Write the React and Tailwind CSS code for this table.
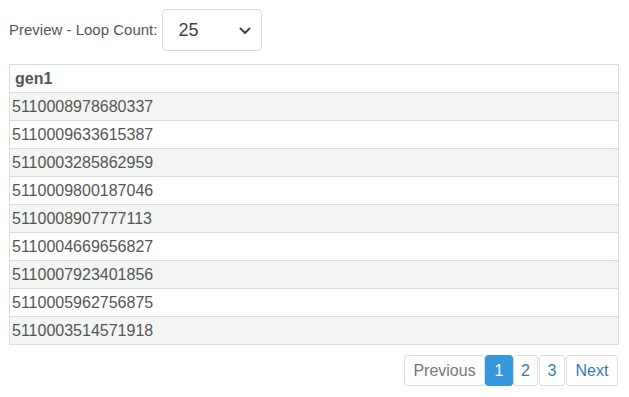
import React from "react";

const rows = [
  "5110008978680337",
  "5110009633615387",
  "5110003285862959",
  "5110009800187046",
  "5110008907777113",
  "5110004669656827",
  "5110007923401856",
  "5110005962756875",
  "5110003514571918",
];

export default function App() {
  return (
    <div className="w-[629px] h-[397px] bg-white text-[#555] pl-[9px] pr-[10px]" style={{ fontFamily: '"Liberation Sans", Arial, sans-serif' }}>
      <div className="flex items-center pt-[9px] h-[51px]">
        <span className="text-[15px] text-[#555] mr-[5px]">Preview - Loop Count:</span>
        <div className="w-[100px] h-[42px] border border-[#ddd] rounded-[4px] flex items-center justify-between pl-[15px] pr-[10px]">
          <span className="text-[18px] text-[#444]">25</span>
          <svg width="12" height="8" viewBox="0 0 12 8" className="mt-[1px]">
            <path d="M1.5 1.5 L6 6 L10.5 1.5" fill="none" stroke="#444" strokeWidth="2" strokeLinecap="round" strokeLinejoin="round" />
          </svg>
        </div>
      </div>
      <div className="mt-[13px] border border-[#ddd]">
        <div className="h-[27px] flex items-center pl-[5px] text-[16px] font-bold text-[#555]">gen1</div>
        {rows.map((r, i) => (
          <div
            key={r}
            className={`h-[28px] flex items-center pl-[2px] text-[16px] text-[#555] border-t border-[#ddd] ${i % 2 === 0 ? "bg-[#f2f5f2]" : "bg-white"}`}
          >
            {r}
          </div>
        ))}
      </div>
      <div className="flex justify-end mt-[10px] mr-[1px] text-[16px]">
        <div className="h-[31px] flex items-center justify-center border border-[#ddd] rounded-[3px] text-[#777] w-[81px]">Previous</div>
        <div className="h-[31px] flex items-center justify-center border border-[#3498db] rounded-[3px] bg-[#3498db] text-white w-[28px]">1</div>
        <div className="h-[31px] flex items-center justify-center border border-[#ddd] rounded-[3px] text-[#337ab7] w-[25px]">2</div>
        <div className="h-[31px] flex items-center justify-center border border-[#ddd] rounded-[3px] text-[#337ab7] w-[26px] ml-[1px]">3</div>
        <div className="h-[31px] flex items-center justify-center border border-[#ddd] rounded-[3px] text-[#337ab7] w-[52px] ml-[1px]">Next</div>
      </div>
    </div>
  );
}
